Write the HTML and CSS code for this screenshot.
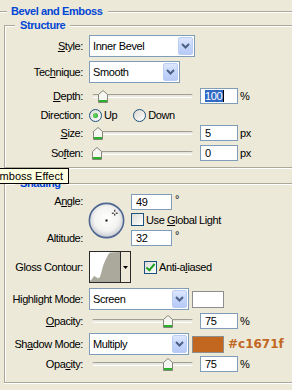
FILE: index.html
```html
<!DOCTYPE html>
<html>
<head>
<meta charset="utf-8">
<link rel="stylesheet" href="styles.css">
</head>
<body>
<div class="outer">
  <div class="legend title">Bevel and Emboss</div>

  <div class="group structure">
    <div class="legend">Structure</div>

    <div class="row r-style">
      <span class="lbl"><u>S</u>tyle:</span>
      <div class="select sel-style"><span class="sel-text">Inner Bevel</span><span class="dd"><svg width="9" height="6" viewBox="0 0 9 6"><path d="M1 1 L4.5 4.5 L8 1" fill="none" stroke="#4d6185" stroke-width="2"/></svg></span></div>
    </div>

    <div class="row r-tech">
      <span class="lbl">Tec<u>h</u>nique:</span>
      <div class="select sel-tech"><span class="sel-text">Smooth</span><span class="dd"><svg width="9" height="6" viewBox="0 0 9 6"><path d="M1 1 L4.5 4.5 L8 1" fill="none" stroke="#4d6185" stroke-width="2"/></svg></span></div>
    </div>

    <div class="row r-depth">
      <span class="lbl"><u>D</u>epth:</span>
      <div class="slider"><span class="track"></span><svg class="thumb" style="left:6px" width="10" height="13" viewBox="0 0 10 13"><path d="M0.5 4.5 L5 0.5 L9.5 4.5 V12.5 H0.5 Z" fill="#f6f6f2" stroke="#858578"/><rect x="1" y="10" width="8" height="2" fill="#2bb02b"/></svg></div>
      <div class="num"><span class="sel">100</span><span class="caret"></span></div>
      <span class="unit">%</span>
    </div>

    <div class="row r-dir">
      <span class="lbl">Direction:</span>
      <span class="radio on first"></span><span class="rtext">Up</span>
      <span class="radio second"></span><span class="rtext">Down</span>
    </div>

    <div class="row r-size">
      <span class="lbl"><u>S</u>ize:</span>
      <div class="slider"><span class="track"></span><svg class="thumb" style="left:1px" width="10" height="13" viewBox="0 0 10 13"><path d="M0.5 4.5 L5 0.5 L9.5 4.5 V12.5 H0.5 Z" fill="#f6f6f2" stroke="#858578"/><rect x="1" y="10" width="8" height="2" fill="#2bb02b"/></svg></div>
      <div class="num">5</div>
      <span class="unit">px</span>
    </div>

    <div class="row r-soften">
      <span class="lbl">So<u>f</u>ten:</span>
      <div class="slider"><span class="track"></span><svg class="thumb" style="left:0px" width="10" height="13" viewBox="0 0 10 13"><path d="M0.5 4.5 L5 0.5 L9.5 4.5 V12.5 H0.5 Z" fill="#f6f6f2" stroke="#858578"/><rect x="1" y="10" width="8" height="2" fill="#2bb02b"/></svg></div>
      <div class="num">0</div>
      <span class="unit">px</span>
    </div>
  </div>

  <div class="group shading">
    <div class="legend">Shading</div>

    <div class="angle-block">
      <div class="lblcol">
        <span class="lbl">A<u>n</u>gle:</span>
        <span class="lbl">Altitude:</span>
      </div>
      <svg class="dial" width="37" height="37" viewBox="0 0 38 38">
        <defs>
          <radialGradient id="dialg" cx="50%" cy="45%" r="55%">
            <stop offset="0" stop-color="#ffffff"/>
            <stop offset="0.65" stop-color="#f3f3f1"/>
            <stop offset="1" stop-color="#c4c7cf"/>
          </radialGradient>
        </defs>
        <circle cx="19" cy="19" r="17.6" fill="url(#dialg)" stroke="#4d6590" stroke-width="1.6"/>
        <rect x="18" y="18" width="2" height="2" fill="#000"/>
        <path d="M27.5 8 v2 M27.5 12 v2 M24.5 11.5 h2 M28.5 11.5 h2" stroke="#000" stroke-width="1"/>
      </svg>
      <div class="rightcol">
        <div class="mini-row"><div class="num num-ang">49</div><span class="deg">°</span></div>
        <div class="mini-row check-row"><span class="check"></span><span class="ctext">Use <u>G</u>lobal Light</span></div>
        <div class="mini-row alt-row"><div class="num num-ang">32</div><span class="deg">°</span></div>
      </div>
    </div>

    <div class="row r-gloss">
      <span class="lbl">Gloss Contour:</span>
      <div class="contour">
        <svg class="contour-thumb" width="30" height="30" viewBox="0 0 30 30"><path d="M0 29 L2 27 L4 24 L6 25 L8 26.5 L10 25 L11.5 20 L13 14 L15 9 L17 5 L18.5 2 L20 0.5 L30 0 L30 30 L0 30 Z" fill="#aba99c"/></svg>
        <span class="contour-dd"><svg width="5" height="3" viewBox="0 0 5 3"><path d="M0 0 H5 L2.5 3 Z" fill="#000"/></svg></span>
      </div>
      <span class="check on aa"></span><span class="ctext">Anti-a<u>l</u>iased</span>
    </div>

    <div class="row r-hl">
      <span class="lbl">Hi<u>g</u>hlight Mode:</span>
      <div class="select sel-mode"><span class="sel-text">Screen</span><span class="dd"><svg width="9" height="6" viewBox="0 0 9 6"><path d="M1 1 L4.5 4.5 L8 1" fill="none" stroke="#4d6185" stroke-width="2"/></svg></span></div>
      <span class="swatch sw-white"></span>
    </div>

    <div class="row r-op1">
      <span class="lbl"><u>O</u>pacity:</span>
      <div class="slider"><span class="track"></span><svg class="thumb" style="left:71px" width="10" height="13" viewBox="0 0 10 13"><path d="M0.5 4.5 L5 0.5 L9.5 4.5 V12.5 H0.5 Z" fill="#f6f6f2" stroke="#858578"/><rect x="1" y="10" width="8" height="2" fill="#2bb02b"/></svg></div>
      <div class="num">75</div>
      <span class="unit">%</span>
    </div>

    <div class="row r-sh">
      <span class="lbl">Sh<u>a</u>dow Mode:</span>
      <div class="select sel-mode"><span class="sel-text">Multiply</span><span class="dd"><svg width="9" height="6" viewBox="0 0 9 6"><path d="M1 1 L4.5 4.5 L8 1" fill="none" stroke="#4d6185" stroke-width="2"/></svg></span></div>
      <span class="swatch sw-brown"></span>
      <span class="hex">#c1671f</span>
    </div>

    <div class="row r-op2">
      <span class="lbl">Opa<u>c</u>ity:</span>
      <div class="slider"><span class="track"></span><svg class="thumb" style="left:71px" width="10" height="13" viewBox="0 0 10 13"><path d="M0.5 4.5 L5 0.5 L9.5 4.5 V12.5 H0.5 Z" fill="#f6f6f2" stroke="#858578"/><rect x="1" y="10" width="8" height="2" fill="#2bb02b"/></svg></div>
      <div class="num">75</div>
      <span class="unit">%</span>
    </div>
  </div>
</div>

<div class="tooltip">Bevel and Emboss Effect</div>
</body>
</html>
```

FILE: styles.css
```css
html, body {
  margin: 0;
  padding: 0;
  background: #ece9d8;
}

body {
  position: relative;
  width: 292px;
  height: 390px;
  overflow: hidden;
  font-family: "Liberation Sans", Arial, sans-serif;
  font-size: 11px;
  letter-spacing: -0.4px;
  color: #000;
}

u { text-decoration: underline; text-underline-offset: 1px; }

.outer {
  margin-top: 11px;
  border-top: 1px solid #aca899;
  box-shadow: inset 0 1px 0 #fff;
}

.legend {
  width: fit-content;
  background: #ece9d8;
  color: #0046d5;
  font-weight: bold;
  line-height: 13px;
  margin-top: -7px;
  position: relative;
}

.title {
  margin-left: 7px;
  padding: 0 6px 0 4px;
  letter-spacing: -0.4px;
}

.group {
  margin-left: 4px;
  border-top: 1px solid #aca899;
  border-left: 1px solid #aca899;
  border-bottom: 1px solid #aca899;
  box-shadow: inset 1px 1px 0 #fff, 0 1px 0 #fff;
}

.group > .legend {
  margin-left: 10px;
  padding: 0 5px;
  letter-spacing: -0.4px;
}

.structure { margin-top: 7px; padding-bottom: 6px; }
.shading { margin-top: 15px; padding-bottom: 10px; }

.row {
  display: flex;
  align-items: center;
}

.lbl {
  width: 78px;
  flex: none;
  text-align: right;
  white-space: nowrap;
}

.r-style { margin-top: 3px; height: 22px; }
.r-tech { margin-top: 4px; height: 22px; }
.r-depth { margin-top: 5px; height: 16px; }
.r-dir { margin-top: 4px; height: 14px; }
.r-size { margin-top: 3px; height: 16px; }
.r-soften { margin-top: 4px; height: 16px; }

/* select / combo */
.select {
  display: flex;
  align-items: stretch;
  box-sizing: border-box;
  height: 22px;
  margin-left: 6px;
  flex: none;
  border: 1px solid #7f9db9;
  background: #fff;
}
.sel-style { width: 106px; }
.sel-tech { width: 91px; }
.sel-mode { width: 100px; }

.sel-text {
  flex: 1;
  display: flex;
  align-items: center;
  padding-left: 3px;
}

.dd {
  width: 15px;
  margin: 1px;
  box-sizing: border-box;
  border: 1px solid #bccdf5;
  border-radius: 2px;
  background: linear-gradient(180deg, #dde7fe 0%, #c7d7fc 45%, #b7caf7 100%);
  display: flex;
  align-items: center;
  justify-content: center;
}

/* slider */
.slider {
  position: relative;
  width: 101px;
  height: 13px;
  margin-left: 9px;
  flex: none;
  display: flex;
  align-items: center;
}
.track {
  display: block;
  width: 100%;
  height: 4px;
  border-radius: 2px;
  background: linear-gradient(180deg, #a19f93 0, #a19f93 1px, #e4e2d8 1px, #eeede6 3px, #ffffff 3px);
}
.thumb {
  position: absolute;
  top: 0;
}

/* numeric field */
.num {
  width: 38px;
  height: 16px;
  box-sizing: border-box;
  margin-left: 7px;
  flex: none;
  border: 1px solid #7f9db9;
  background: #fff;
  padding-left: 4px;
  line-height: 14px;
  display: flex;
  align-items: center;
}
.sel {
  background: #316ac5;
  color: #fff;
  line-height: 12px;
  padding-right: 1px;
}
.caret {
  display: block;
  width: 1px;
  height: 12px;
  background: #000;
}
.unit { margin-left: 2px; }

/* radios */
.radio {
  width: 13px;
  height: 13px;
  box-sizing: border-box;
  border-radius: 50%;
  border: 1px solid #1c5180;
  background: linear-gradient(135deg, #dcd9d0, #ffffff);
  display: flex;
  align-items: center;
  justify-content: center;
  flex: none;
}
.radio.on::after {
  content: "";
  width: 5px;
  height: 5px;
  border-radius: 50%;
  background: radial-gradient(circle at 40% 40%, #6ad96a, #21a121);
}
.radio.first { margin-left: 6px; }
.radio.second { margin-left: 16px; }
.rtext { margin-left: 2px; }

/* checkbox */
.check {
  position: relative;
  width: 13px;
  height: 13px;
  box-sizing: border-box;
  border: 1px solid #1c5180;
  background: linear-gradient(135deg, #dcdcd7, #ffffff);
  flex: none;
}
.check.on::after {
  content: "";
  position: absolute;
  left: 3px;
  top: 0px;
  width: 3px;
  height: 7px;
  border-right: 2px solid #21a121;
  border-bottom: 2px solid #21a121;
  transform: rotate(40deg);
}
.ctext { margin-left: 2px; white-space: nowrap; }

/* angle block */
.angle-block {
  display: flex;
  margin-top: 4px;
  height: 52px;
}
.lblcol {
  display: flex;
  flex-direction: column;
  justify-content: space-between;
  width: 78px;
  flex: none;
}
.lblcol .lbl { line-height: 15px; }
.dial {
  margin-left: 5px;
  margin-top: 8px;
  flex: none;
}
.rightcol {
  margin-left: 6px;
  display: flex;
  flex-direction: column;
}
.mini-row {
  display: flex;
  align-items: flex-start;
}
.num-ang {
  width: 41px;
  margin-left: 0;
}
.deg { margin-left: 3px; line-height: 11px; }
.check-row { margin-top: 3px; align-items: center; height: 13px; }
.alt-row { margin-top: 4px; }

/* gloss contour */
.r-gloss { margin-top: 5px; height: 32px; }
.contour {
  margin-left: 6px;
  width: 42px;
  height: 32px;
  box-sizing: border-box;
  border: 1px solid #2a2a2a;
  display: flex;
  flex: none;
  background: #ece9d8;
}
.contour-thumb {
  display: block;
  background: #fff;
  border-right: 1px solid #2a2a2a;
}
.contour-dd {
  flex: 1;
  display: flex;
  align-items: center;
  justify-content: center;
}
.check.aa { margin-left: 13px; }

/* modes */
.r-hl { margin-top: 5px; height: 22px; }
.r-op1 { margin-top: 3px; height: 16px; }
.r-sh { margin-top: 4px; height: 22px; }
.r-op2 { margin-top: 1px; height: 16px; }

.swatch {
  width: 32px;
  height: 17px;
  box-sizing: border-box;
  margin-left: 3px;
  border: 1px solid #8e8e8e;
  flex: none;
}
.sw-white { background: #fff; }
.sw-brown { background: #c1671f; }

.hex {
  margin-left: 4px;
  font-family: "DejaVu Sans", Verdana, sans-serif;
  font-weight: bold;
  font-size: 12px;
  letter-spacing: 0;
  color: #c1671f;
}

/* tooltip */
.tooltip {
  position: absolute;
  top: 168px;
  right: 223px;
  height: 16px;
  box-sizing: border-box;
  border: 1px solid #000;
  background: #ffffe1;
  padding: 0 5px 0 3px;
  line-height: 14px;
  letter-spacing: 0;
  white-space: nowrap;
}
```
